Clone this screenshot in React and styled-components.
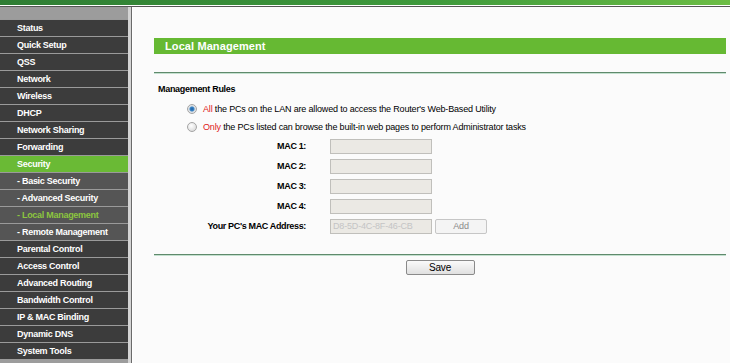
import React from "react"
import styled, { createGlobalStyle } from "styled-components"

const Global = createGlobalStyle`
  html, body { margin: 0; padding: 0; background: #fbfbfb; overflow: hidden; }
  body { font-family: "Liberation Sans", Arial, sans-serif; font-size: 9px; letter-spacing: -0.17px; color: #000; }
`

const menu = [
    { label: "Status" },
    { label: "Quick Setup" },
    { label: "QSS" },
    { label: "Network" },
    { label: "Wireless" },
    { label: "DHCP" },
    { label: "Network Sharing" },
    { label: "Forwarding" },
    { label: "Security", active: true },
    { label: "- Basic Security", sub: true },
    { label: "- Advanced Security", sub: true },
    { label: "- Local Management", sub: true, current: true },
    { label: "- Remote Management", sub: true },
    { label: "Parental Control" },
    { label: "Access Control" },
    { label: "Advanced Routing" },
    { label: "Bandwidth Control" },
    { label: "IP & MAC Binding" },
    { label: "Dynamic DNS" },
    { label: "System Tools" },
]

const Page = styled.div`
  width: 730px;
  height: 363px;
  display: flex;
  flex-direction: column;
`

const TopStrip = styled.div`
  height: 5px;
  background: linear-gradient(to right, #2f7d34, #3f9a3c 60%, #6cbd45);
  border-bottom: 1px solid #ffffff;
  flex-shrink: 0;
`

const Body = styled.div`
  flex: 1;
  display: flex;
  border-top: 1px solid #555;
  min-height: 0;
`

const Sidebar = styled.div`
  width: 128px;
  background: #9c9c9c;
  padding-top: 12px;
  border-right: 3px solid #d4d4d4;
  flex-shrink: 0;
`

const Divider = styled.div`
  width: 1px;
  background: #6a6a6a;
  flex-shrink: 0;
`

const MenuItem = styled.div`
  height: 16px;
  line-height: 16px;
  border-top: 1px solid #9a9a9a;
  padding-left: 17px;
  font-weight: bold;
  font-size: 9px;
  letter-spacing: -0.28px;
  color: ${p => (p.$current ? "#8cc63f" : "#ffffff")};
  background: ${p => (p.$active ? "#6aba35" : p.$sub ? "#555555" : "#3c3c3c")};
  white-space: nowrap;
`

const Content = styled.div`
  flex: 1;
  background: #fbfbfb;
  padding: 31px 4px 0 21px;
  border-left: 1px solid #ffffff;
`

const TitleBar = styled.div`
  height: 16px;
  line-height: 16px;
  background: #66b933;
  color: #fff;
  font-weight: bold;
  font-size: 11px;
  letter-spacing: 0.1px;
  padding-left: 11px;
`

const Rule = styled.div`
  height: 1px;
  background: #5f8a6c;
  border-bottom: 1px solid #c4e0cf;
  margin-top: ${p => p.$top}px;
`

const Section = styled.div`
  padding-left: 4px;
  margin-top: 8px;
`

const Heading = styled.div`
  font-weight: bold;
  letter-spacing: -0.3px;
  height: 14px;
  line-height: 14px;
`

const RadioRow = styled.div`
  display: flex;
  align-items: center;
  height: 18px;
  padding-left: 29px;
  margin-top: ${p => p.$top || 0}px;
`

const Radio = styled.span`
  width: 8px;
  height: 8px;
  border-radius: 50%;
  border: 1px solid #a4a4a4;
  background: ${p =>
        p.$checked
            ? "radial-gradient(circle, #1f5fa0 0, #3a86c8 2px, #d8dde2 3px, #f2f2f2 5px)"
            : "radial-gradient(circle at 40% 35%, #ffffff, #d2d2d2)"};
  margin-right: 6px;
  flex-shrink: 0;
`

const Red = styled.span`
  color: #e02020;
`

const FieldGrid = styled.div`
  display: grid;
  grid-template-columns: 148px 100px auto;
  column-gap: 24px;
  row-gap: 4px;
  margin-top: 2px;
  align-items: center;
`

const Label = styled.div`
  font-weight: bold;
  letter-spacing: -0.35px;
  text-align: right;
  height: 16px;
  line-height: 16px;
`

const Input = styled.div`
  height: 13px;
  width: 98px;
  border: 1px solid #c0bfbb;
  background: #ebe9e4;
  color: #c4c4c4;
  line-height: 13px;
  padding-left: 2px;
  white-space: nowrap;
  overflow: hidden;
  box-sizing: content-box;
`

const AddButton = styled.div`
  width: 50px;
  height: 13px;
  border: 1px solid #c6c6c6;
  border-radius: 2px;
  background: #f4f4f4;
  color: #8a8a8a;
  text-align: center;
  line-height: 13px;
  margin-left: -19px;
`

const Actions = styled.div`
  display: flex;
  justify-content: center;
  margin-top: 4px;
`

const SaveButton = styled.div`
  width: 67px;
  height: 13px;
  border: 1px solid #8a8a8a;
  border-radius: 2px;
  background: linear-gradient(#fafafa, #e0e0e0);
  color: #000;
  text-align: center;
  line-height: 13px;
  font-size: 10px;
`

function App() {
    const macs = ["MAC 1:", "MAC 2:", "MAC 3:", "MAC 4:"]
    return (
        <Page>
            <Global />
            <TopStrip />
            <Body>
                <Sidebar>
                    {menu.map(m => (
                        <MenuItem key={m.label} $active={m.active} $sub={m.sub} $current={m.current}>
                            {m.label}
                        </MenuItem>
                    ))}
                </Sidebar>
                <Divider />
                <Content>
                    <TitleBar>Local Management</TitleBar>
                    <Rule $top={18} />
                    <Section>
                        <Heading>Management Rules</Heading>
                        <RadioRow $top={4}>
                            <Radio $checked />
                            <span><Red>All</Red> the PCs on the LAN are allowed to access the Router's Web-Based Utility</span>
                        </RadioRow>
                        <RadioRow>
                            <Radio />
                            <span><Red>Only</Red> the PCs listed can browse the built-in web pages to perform Administrator tasks</span>
                        </RadioRow>
                        <FieldGrid>
                            {macs.map(m => (
                                <React.Fragment key={m}>
                                    <Label>{m}</Label>
                                    <Input />
                                    <span />
                                </React.Fragment>
                            ))}
                            <Label>Your PC's MAC Address:</Label>
                            <Input>D8-5D-4C-8F-46-CB</Input>
                            <AddButton>Add</AddButton>
                        </FieldGrid>
                    </Section>
                    <Rule $top={20} />
                    <Actions>
                        <SaveButton>Save</SaveButton>
                    </Actions>
                </Content>
            </Body>
        </Page>
    )
}

export default App
